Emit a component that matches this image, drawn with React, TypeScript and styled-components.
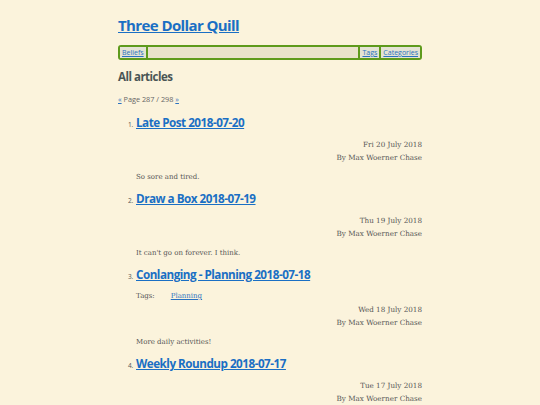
import styled, { createGlobalStyle } from "styled-components";

const GlobalStyle = createGlobalStyle`
  body {
    margin: 0;
    background-color: #fbf3dc;
    color: #555;
    font-family: "DejaVu Serif", serif;
  }
`;

const Page = styled.div`
  width: 304px;
  margin: 0 auto;
  padding-top: 14px;
`;

const SiteTitle = styled.h1`
  margin: 0;
  font-family: "Open Sans", sans-serif;
  font-size: 15px;
  font-weight: 700;
  line-height: 22px;
  letter-spacing: -0.6px;
  a {
    color: #1a6fc4;
  }
`;

const Nav = styled.nav`
  display: flex;
  align-items: stretch;
  margin-top: 9px;
  height: 11px;
  border: 2px solid #5e9a1c;
  border-radius: 3px;
  background-color: #e9e2cb;
  font-family: "Open Sans", sans-serif;
  font-size: 7px;
  line-height: 11px;
`;

const NavLink = styled.a<{ $left?: boolean }>`
  padding: 0 2px;
  color: #2a72c0;
  background-color: #e4e3d4;
  ${(p) => (p.$left ? "border-right" : "border-left")}: 2px solid #5e9a1c;
`;

const Spacer = styled.div`
  flex: 1;
`;

const Heading = styled.h2`
  margin: 9px 0 0;
  font-family: "Open Sans", sans-serif;
  font-size: 11.5px;
  font-weight: 700;
  color: #4a5555;
  line-height: 16px;
  letter-spacing: -0.5px;
`;

const Pager = styled.div`
  margin-top: 9px;
  font-family: "Open Sans", sans-serif;
  font-size: 7.3px;
  line-height: 10px;
  color: #666;
  a {
    color: #2a72c0;
  }
`;

const List = styled.ol`
  margin: 10px 0 0;
  padding-left: 17px;
  font-family: "Open Sans", sans-serif;
  font-size: 6.5px;
  color: #555;
`;

const Item = styled.li`
  padding-left: 1px;
  margin-bottom: 8px;
`;

const PostTitle = styled.a`
  font-size: 11.7px;
  font-weight: 700;
  line-height: 17px;
  color: #1a6fc4;
  letter-spacing: -0.5px;
`;

const Tags = styled.div`
  display: flex;
  margin-top: 8px;
  font-family: "DejaVu Serif", serif;
  font-size: 7px;
  line-height: 10px;
  a {
    margin-left: 16px;
    color: #2a72c0;
  }
`;

const Meta = styled.div<{ $tight?: boolean }>`
  margin-top: ${(p) => (p.$tight ? 3 : 8)}px;
  text-align: right;
  font-family: "DejaVu Serif", serif;
  font-size: 7.2px;
  line-height: 12.5px;
  color: #555;
`;

const Excerpt = styled.p`
  margin: 8px 0 0;
  font-family: "DejaVu Serif", serif;
  font-size: 7px;
  line-height: 10px;
  color: #555;
`;

interface Post {
  title: string;
  date: string;
  tags?: string[];
  excerpt: string;
}

const posts: Post[] = [
  { title: "Late Post 2018-07-20", date: "Fri 20 July 2018", excerpt: "So sore and tired." },
  { title: "Draw a Box 2018-07-19", date: "Thu 19 July 2018", excerpt: "It can't go on forever. I think." },
  {
    title: "Conlanging - Planning 2018-07-18",
    date: "Wed 18 July 2018",
    tags: ["Planning"],
    excerpt: "More daily activities!",
  },
  { title: "Weekly Roundup 2018-07-17", date: "Tue 17 July 2018", excerpt: "Another week done." },
];

function App() {
  return (
    <>
      <GlobalStyle />
      <Page>
        <SiteTitle>
          <a href="#">Three Dollar Quill</a>
        </SiteTitle>
        <Nav>
          <NavLink href="#" $left>
            Beliefs
          </NavLink>
          <Spacer />
          <NavLink href="#">Tags</NavLink>
          <NavLink href="#">Categories</NavLink>
        </Nav>
        <Heading>All articles</Heading>
        <Pager>
          <a href="#">«</a> Page 287 / 298 <a href="#">»</a>
        </Pager>
        <List>
          {posts.map((post) => (
            <Item key={post.title}>
              <PostTitle href="#">{post.title}</PostTitle>
              {post.tags && (
                <Tags>
                  <span>Tags:</span>
                  {post.tags.map((t) => (
                    <a href="#" key={t}>
                      {t}
                    </a>
                  ))}
                </Tags>
              )}
              <Meta $tight={!!post.tags}>
                {post.date}
                <br />
                By Max Woerner Chase
              </Meta>
              <Excerpt>{post.excerpt}</Excerpt>
            </Item>
          ))}
        </List>
      </Page>
    </>
  );
}

export default App;
